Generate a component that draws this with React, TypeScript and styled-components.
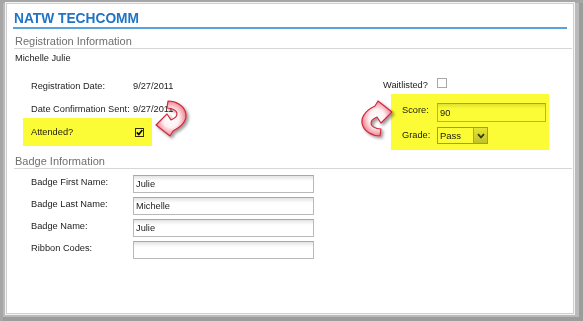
import React from "react";
import styled, { createGlobalStyle } from "styled-components";

const Global = createGlobalStyle`
  html, body { margin: 0; padding: 0; background: #ffffff; }
  body { font-family: "Liberation Sans", Arial, sans-serif; color: #1c1c1c; }
  * { box-sizing: border-box; }
`;

const Frame = styled.div`
  width: 583px;
  height: 321px;
  padding: 3px 9px 7px 6px;
  background: #bababa;
  box-shadow: inset 3px 3px 0 #a6a6a6, inset -4px -4px 0 #9c9c9c;
  display: flex;
`;

const Panel = styled.div`
  flex: 1;
  background: #ffffff;
  border: 1px solid #cfcfcf;
  box-shadow: 0 0 0 1px #f4f4f4;
  display: flex;
  flex-direction: column;
`;

const Title = styled.h1`
  margin: 7px 6px 0;
  padding: 0 0 0 1px;
  font-size: 13.75px;
  line-height: 16px;
  font-weight: bold;
  color: #1f74c4;
  border-bottom: 2px solid #57a1dd;
`;

const SectionHeading = styled.h2<{ $top: number }>`
  margin: ${(p) => p.$top}px 1px 0 7px;
  padding: 0 0 0 1px;
  font-size: 11px;
  line-height: 14px;
  font-weight: normal;
  color: #707070;
  border-bottom: 1px solid #d6d6d6;
`;

const Text = styled.div`
  font-size: 9.25px;
  line-height: 12px;
  white-space: nowrap;
`;

const PersonName = styled(Text)`
  margin-top: 3px;
  padding-left: 8px;
`;

const RegGrid = styled.div`
  margin: 11px 0 0 16px;
  display: grid;
  grid-template-columns: 360px auto;
  align-items: start;
`;

const Column = styled.div`
  display: flex;
  flex-direction: column;
  gap: 1px;
`;

const InfoRow = styled.div<{ $h?: number; $pl?: number }>`
  height: ${(p) => p.$h ?? 22}px;
  display: flex;
  align-items: center;
  padding-left: ${(p) => p.$pl ?? 8}px;
`;

const Label = styled(Text)<{ $w: number; $pt?: number }>`
  width: ${(p) => p.$w}px;
  flex: none;
  padding-top: ${(p) => p.$pt ?? 0}px;
`;

const Highlight = styled.div<{ $w: number; $h: number; $mt: number; $ml?: number }>`
  position: relative;
  width: ${(p) => p.$w}px;
  height: ${(p) => p.$h}px;
  margin-top: ${(p) => p.$mt}px;
  margin-left: ${(p) => p.$ml ?? 0}px;
  &::after {
    content: "";
    position: absolute;
    inset: 0;
    background: #fcfc36;
    mix-blend-mode: multiply;
    pointer-events: none;
  }
`;

const AttendedBox = styled(Highlight)`
  display: flex;
  align-items: center;
  padding-left: 8px;
`;

const GradeBox = styled(Highlight)`
  display: flex;
  flex-direction: column;
  gap: 5px;
  padding: 9px 3px 0 11px;
`;

const FieldRow = styled.div`
  display: flex;
  align-items: flex-start;
`;

const CheckBox = styled.span<{ $checked?: boolean; $mb?: number }>`
  width: ${(p) => (p.$checked ? 9 : 10)}px;
  height: ${(p) => (p.$checked ? 9 : 10)}px;
  flex: none;
  margin-left: ${(p) => (p.$checked ? 2 : 0)}px;
  margin-bottom: ${(p) => p.$mb ?? 0}px;
  border: 1px solid ${(p) => (p.$checked ? "#2e2e2e" : "#a9a9a9")};
  background: #ffffff;
  display: flex;
  align-items: center;
  justify-content: center;
`;

const TextBox = styled.input<{ $w: number; $h: number }>`
  width: ${(p) => p.$w}px;
  height: ${(p) => p.$h}px;
  flex: none;
  margin: 0;
  padding: 0 2px;
  border: 1px solid #b9b9b9;
  border-top-color: #a8a8a8;
  background: linear-gradient(#e4e4e4, #ffffff 5px, #ffffff);
  font-family: "Liberation Sans", Arial, sans-serif;
  font-size: 9.25px;
  color: #1c1c1c;
  outline: none;
`;

const Select = styled.div`
  width: 51px;
  height: 17px;
  flex: none;
  border: 1px solid #a2a2a2;
  background: #ffffff;
  display: flex;
  align-items: stretch;
`;

const SelectValue = styled.span`
  flex: 1;
  padding-left: 2px;
  font-size: 9.5px;
  line-height: 15px;
`;

const SelectButton = styled.span`
  width: 14px;
  flex: none;
  border-left: 1px solid #b0b0b0;
  background: linear-gradient(#e9e9e9, #c4c4c4);
  display: flex;
  align-items: center;
  justify-content: center;
`;

const BadgeList = styled.div`
  margin-top: 6px;
  padding-left: 24px;
  display: flex;
  flex-direction: column;
  gap: 4px;
`;

const ArrowSvg = styled.svg<{ $l: number; $t: number }>`
  position: absolute;
  left: ${(p) => p.$l}px;
  top: ${(p) => p.$t}px;
  z-index: 2;
  overflow: visible;
`;

const ARROW_PATH =
  "M14 0 C31 0, 42 19, 19 30 L16 35 L2 24 L13 13 L17 19 C26 15, 25 8, 13 7 Z";

const CurvedArrow = ({ id, l, t, flip }: { id: string; l: number; t: number; flip?: boolean }) => (
  <ArrowSvg $l={l} $t={t} width="36" height="38" viewBox="0 0 36 38">
    <defs>
      <radialGradient id={`${id}-g`} cx="50%" cy="50%" r="58%">
        <stop offset="0%" stopColor="#ffffff" />
        <stop offset="45%" stopColor="#fff2f3" />
        <stop offset="78%" stopColor="#f39ba6" />
        <stop offset="100%" stopColor="#df4458" />
      </radialGradient>
      <filter id={`${id}-s`} x="-30%" y="-30%" width="160%" height="160%">
        <feDropShadow dx="2" dy="2" stdDeviation="1.5" floodColor="#000" floodOpacity="0.4" />
      </filter>
    </defs>
    <g filter={`url(#${id}-s)`}>
      <path
        d={ARROW_PATH}
        transform={flip ? "rotate(180 18 19)" : undefined}
        fill={`url(#${id}-g)`}
        stroke="#cf2a3e"
        strokeWidth="1.2"
        strokeLinejoin="round"
      />
    </g>
  </ArrowSvg>
);

const Tick = () => (
  <svg width="7" height="7" viewBox="0 0 7 7">
    <path d="M0.8 3.4 L2.8 5.6 L6.3 1" fill="none" stroke="#000" strokeWidth="1.6" />
  </svg>
);

const Chevron = () => (
  <svg width="8" height="6" viewBox="0 0 8 6">
    <path d="M1 1.2 L4 4.4 L7 1.2" fill="none" stroke="#2f3a1c" strokeWidth="1.7" />
  </svg>
);

const badgeFields = [
  { label: "Badge First Name:", value: "Julie" },
  { label: "Badge Last Name:", value: "Michelle" },
  { label: "Badge Name:", value: "Julie" },
  { label: "Ribbon Codes:", value: "" },
];

export default function App() {
  return (
    <>
      <Global />
      <Frame>
        <Panel>
          <Title>NATW TECHCOMM</Title>
          <SectionHeading $top={5}>Registration Information</SectionHeading>
          <PersonName>Michelle Julie</PersonName>
          <RegGrid>
            <Column>
              <InfoRow>
                <Label $w={102}>Registration Date:</Label>
                <Text>9/27/2011</Text>
              </InfoRow>
              <InfoRow>
                <Label $w={102}>Date Confirmation Sent:</Label>
                <Text>9/27/2011</Text>
              </InfoRow>
              <AttendedBox $w={129} $h={28} $mt={-3}>
                <Label $w={102}>Attended?</Label>
                <CheckBox $checked>
                  <Tick />
                </CheckBox>
                <CurvedArrow id="arrow-left" l={131} t={-17} />
              </AttendedBox>
            </Column>
            <Column>
              <InfoRow $h={20} $pl={0}>
                <Label $w={54}>Waitlisted?</Label>
                <CheckBox $mb={4} />
              </InfoRow>
              <GradeBox $w={158} $h={56} $mt={-2} $ml={8}>
                <FieldRow>
                  <Label $w={35} $pt={1}>Score:</Label>
                  <TextBox $w={109} $h={19} readOnly defaultValue="90" />
                </FieldRow>
                <FieldRow>
                  <Label $w={35} $pt={2}>Grade:</Label>
                  <Select>
                    <SelectValue>Pass</SelectValue>
                    <SelectButton>
                      <Chevron />
                    </SelectButton>
                  </Select>
                </FieldRow>
                <CurvedArrow id="arrow-right" l={-33} t={4} flip />
              </GradeBox>
            </Column>
          </RegGrid>
          <SectionHeading $top={4}>Badge Information</SectionHeading>
          <BadgeList>
            {badgeFields.map((f) => (
              <FieldRow key={f.label}>
                <Label $w={102} $pt={1}>{f.label}</Label>
                <TextBox $w={181} $h={18} readOnly defaultValue={f.value} />
              </FieldRow>
            ))}
          </BadgeList>
        </Panel>
      </Frame>
    </>
  );
}
